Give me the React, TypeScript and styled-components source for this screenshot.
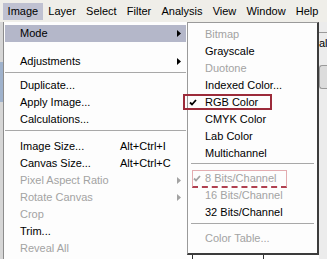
import React from 'react';
import styled, { createGlobalStyle } from 'styled-components';

const Global = createGlobalStyle`
  html, body { margin: 0; padding: 0; }
  body {
    width: 327px; height: 259px; overflow: hidden;
    background: #ecebe7;
    font-family: "Liberation Sans", Arial, sans-serif;
    font-size: 11px;
  }
`;

const Screen = styled.div`
  width: 327px; height: 259px;
  display: flex; flex-direction: column;
  overflow: hidden;
  background: #ecebe7;
`;

const MenuBar = styled.div`
  height: 22px; flex: none;
  display: flex; align-items: flex-end;
  padding: 0 0 2px 2.5px; box-sizing: border-box;
  background: #efeee9;
`;

const BarItem = styled.div<{ $active?: boolean }>`
  height: 17px; line-height: 17px;
  padding: 0 5.1px;
  color: #000;
  background: ${p => (p.$active ? '#bfc1d1' : 'transparent')};
`;

const Body = styled.div`
  flex: 1; display: flex; min-height: 0;
`;

const LeftGutter = styled.div`
  width: 3px; flex: none;
  background: linear-gradient(#d6d6d6 0 40px, #9fb2cc 40px 80px, #d6d6d6 80px);
`;

const MainMenu = styled.div`
  width: 184px; flex: none;
  box-sizing: border-box;
  border-left: 1px solid #8c8c8c;
  background: #fdfdfd;
  padding-top: 3px;
  display: flex; flex-direction: column;
`;

const MainRow = styled.div<{ $hl?: boolean; $dim?: boolean }>`
  height: 17px; flex: none;
  margin: 0 1px;
  padding-left: 15px;
  display: grid;
  grid-template-columns: 100px 1fr 9px;
  align-items: center;
  line-height: 17px;
  white-space: nowrap;
  color: ${p => (p.$dim ? '#a3a3a3' : '#000')};
  background: ${p => (p.$hl ? '#b4b7c9' : 'transparent')};
`;

const Shortcut = styled.span`
  color: inherit;
`;

const ArrowCell = styled.span`
  display: flex; align-items: center;
`;

const Sep = styled.div<{ $mt: number; $mb: number; $mx: number }>`
  flex: none;
  height: 1px;
  background: #a8a8a8;
  margin: ${p => `${p.$mt}px ${p.$mx}px ${p.$mb}px`};
`;

const Gap = styled.div<{ $h: number }>`
  flex: none; height: ${p => p.$h}px;
`;

const SubColumn = styled.div`
  width: 132px; flex: none;
  display: flex; flex-direction: column;
`;

const SubMenu = styled.div`
  flex: none;
  box-sizing: border-box;
  height: 233px;
  background: #fdfdfd;
  border: 1px solid #9a9a9a;
  border-right: 2px solid #3c3c3c;
  border-bottom: 2px solid #3c3c3c;
  padding-top: 3px;
  display: flex; flex-direction: column;
`;

const SubRow = styled.div<{ $dim?: boolean }>`
  position: relative;
  height: 17px; flex: none;
  display: grid;
  grid-template-columns: 17px 1fr;
  align-items: center;
  line-height: 17px;
  white-space: nowrap;
  color: ${p => (p.$dim ? '#a3a3a3' : '#000')};
`;

const CheckCell = styled.span<{ $inset: number }>`
  display: flex; align-items: center;
  padding-left: ${p => p.$inset}px;
`;

const RedBox = styled.div`
  position: absolute;
  left: -5px; top: 0;
  width: 89px; height: 16px;
  box-sizing: border-box;
  border: 2px solid #9c2b3a;
  pointer-events: none;
`;

const PinkBox = styled.div`
  position: absolute;
  left: 4px; top: 0;
  width: 95px; height: 18px;
  box-sizing: border-box;
  border: 1px solid #e3acb0;
  border-bottom: 2px dashed #b04050;
  pointer-events: none;
`;

const BelowSub = styled.div`
  flex: 1;
  background: #fff;
  display: flex;
`;

const BgLine = styled.div<{ $w: number }>`
  width: ${p => p.$w}px; flex: none;
  border-right: 1px solid #333;
`;

const RightGutter = styled.div`
  flex: 1;
  display: flex; flex-direction: column;
  background: #ececec;
  overflow: hidden;
`;

const GutterLine = styled.div`
  height: 1px; margin-top: 10px; background: #9a9a9a;
`;

const GutterText = styled.div`
  margin-top: 4px;
  line-height: 12px;
  font-size: 11px;
  white-space: nowrap;
  color: #000;
`;

const GutterButton = styled.div`
  margin-top: 16px;
  height: 22px;
  border: 1px solid #9a9a9a;
  border-right: none;
  border-radius: 3px 0 0 3px;
  background: #dcdcdc;
`;

const Arrow = ({ dim }: { dim?: boolean }) => (
  <svg width="4" height="7" viewBox="0 0 4 7">
    <polygon points="0,0 4,3.5 0,7" fill={dim ? '#a3a3a3' : '#000'} />
  </svg>
);

const Check = ({ dim }: { dim?: boolean }) => (
  <svg width="8" height="7" viewBox="0 0 8 7">
    <path d="M1 3.5 L3 5.5 L7 1" stroke={dim ? '#a3a3a3' : '#000'} strokeWidth="1.8" fill="none" />
  </svg>
);

type MainItem = { label: string; shortcut?: string; arrow?: boolean; dim?: boolean; hl?: boolean };

const MRow = ({ label, shortcut, arrow, dim, hl }: MainItem) => (
  <MainRow $dim={dim} $hl={hl}>
    <span>{label}</span>
    <Shortcut>{shortcut ?? ''}</Shortcut>
    <ArrowCell>{arrow ? <Arrow dim={dim} /> : null}</ArrowCell>
  </MainRow>
);

type SubItem = { label: string; dim?: boolean; check?: boolean; mark?: 'red' | 'pink' };

const SRow = ({ label, dim, check, mark }: SubItem) => (
  <SubRow $dim={dim}>
    <CheckCell $inset={mark === 'pink' ? 5 : 1}>{check ? <Check dim={dim} /> : null}</CheckCell>
    <span>{label}</span>
    {mark === 'red' && <RedBox />}
    {mark === 'pink' && <PinkBox />}
  </SubRow>
);

const barItems = ['Image', 'Layer', 'Select', 'Filter', 'Analysis', 'View', 'Window', 'Help'];

export default function App() {
  return (
    <Screen>
      <Global />
      <MenuBar>
        {barItems.map((b, i) => (
          <BarItem key={b} $active={i === 0}>{b}</BarItem>
        ))}
      </MenuBar>
      <Body>
        <LeftGutter />
        <MainMenu>
          <MRow label="Mode" arrow hl />
          <Gap $h={11} />
          <MRow label="Adjustments" arrow />
          <Sep $mt={2} $mb={4} $mx={1} />
          <MRow label="Duplicate..." />
          <MRow label="Apply Image..." />
          <MRow label="Calculations..." />
          <Sep $mt={2} $mb={7} $mx={1} />
          <MRow label="Image Size..." shortcut="Alt+Ctrl+I" />
          <MRow label="Canvas Size..." shortcut="Alt+Ctrl+C" />
          <MRow label="Pixel Aspect Ratio" arrow dim />
          <MRow label="Rotate Canvas" arrow dim />
          <MRow label="Crop" dim />
          <MRow label="Trim..." />
          <MRow label="Reveal All" dim />
        </MainMenu>
        <SubColumn>
          <SubMenu>
            <SRow label="Bitmap" dim />
            <SRow label="Grayscale" />
            <SRow label="Duotone" dim />
            <SRow label="Indexed Color..." />
            <SRow label="RGB Color" check mark="red" />
            <SRow label="CMYK Color" />
            <SRow label="Lab Color" />
            <SRow label="Multichannel" />
            <Sep $mt={1} $mb={6} $mx={3} />
            <SRow label="8 Bits/Channel" dim check mark="pink" />
            <SRow label="16 Bits/Channel" dim />
            <SRow label="32 Bits/Channel" />
            <Sep $mt={2} $mb={6} $mx={3} />
            <SRow label="Color Table..." dim />
          </SubMenu>
          <BelowSub>
            <BgLine $w={5} />
            <BgLine $w={70} />
          </BelowSub>
        </SubColumn>
        <RightGutter>
          <GutterLine />
          <GutterText>al</GutterText>
          <GutterButton />
        </RightGutter>
      </Body>
    </Screen>
  );
}
